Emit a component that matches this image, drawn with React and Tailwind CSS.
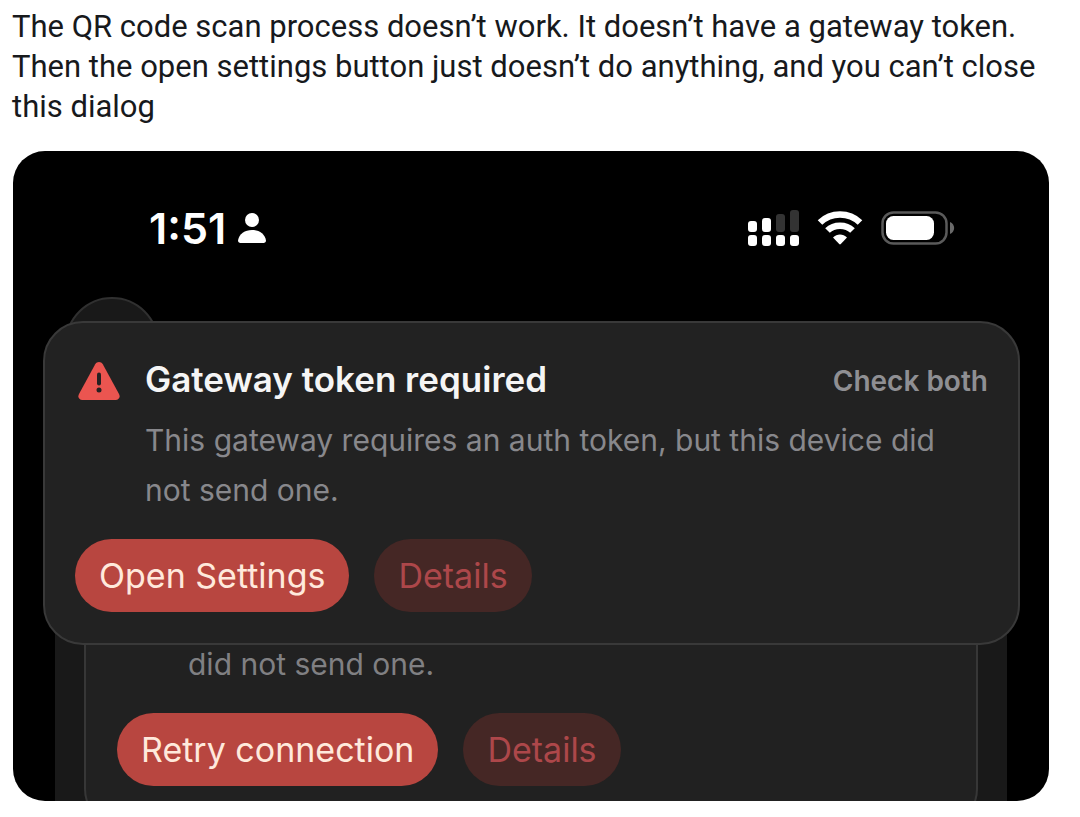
const textFont = "font-['Inter','Liberation_Sans',sans-serif]";

function PersonIcon() {
  return (
    <svg className="h-[30px] w-[28px]" viewBox="0 0 28 30" fill="white" aria-hidden="true">
      <circle cx="14" cy="7" r="7" />
      <path d="M2.5 30C1 30 0 29 0 27.5C1 21 7 17 14 17C21 17 27 21 28 27.5C28 29 27 30 25.5 30Z" />
    </svg>
  );
}

function SignalIcon() {
  return (
    <svg className="h-9 w-[52px]" viewBox="0 0 52 36" fill="white" aria-hidden="true">
      <rect x="1" y="11" width="9" height="11" rx="3" />
      <rect x="15" y="8" width="9" height="14" rx="3" />
      <rect x="29" y="4" width="9" height="18" rx="3" fill="#333333" />
      <rect x="43" y="0" width="9" height="22" rx="3" fill="#333333" />
      <rect x="1" y="25" width="9" height="11" rx="3" />
      <rect x="15" y="25" width="9" height="11" rx="3" />
      <rect x="29" y="25" width="9" height="11" rx="3" />
      <rect x="43" y="25" width="9" height="11" rx="3" />
    </svg>
  );
}

function WifiIcon() {
  return (
    <svg className="h-[34px] w-[46px]" viewBox="0 0 46 34" aria-hidden="true">
      <path d="M3 11.5C14 0.8 32 0.8 43 11.5" fill="none" stroke="white" strokeWidth="6.5" />
      <path d="M10.5 19.5C17 13 29 13 35.5 19.5" fill="none" stroke="white" strokeWidth="6.5" />
      <path d="M16 26.5C20 22.4 26 22.4 30 26.5L23.8 33Q23 33.8 22.2 33Z" fill="white" />
    </svg>
  );
}

function BatteryIcon() {
  return (
    <svg className="h-[34px] w-[74px]" viewBox="0 0 74 34" aria-hidden="true">
      <rect x="1.5" y="1.5" width="64" height="31" rx="11" fill="none" stroke="#5a5a5a" strokeWidth="2.5" />
      <rect x="5" y="5" width="48" height="24" rx="7.5" fill="white" />
      <path d="M69 11C74.5 13 74.5 21 69 23Z" fill="#6a6a6a" />
    </svg>
  );
}

function WarningIcon() {
  return (
    <svg className="h-11 w-[42px]" viewBox="0 -4 42 44" aria-hidden="true">
      <path
        d="M17.2 3.2C19 0.2 23 0.2 24.8 3.2L41 33C42.6 36 41 39 37.6 39H4.4C1 39 -0.6 36 1 33Z"
        fill="#eb5550"
      />
      <path d="M21 13.5V22.5" stroke="#242122" strokeWidth="4" strokeLinecap="round" />
      <circle cx="21" cy="29" r="2.5" fill="#242122" />
    </svg>
  );
}

function PillButton({ children, primary }) {
  return (
    <button
      type="button"
      className={`h-[73px] rounded-full px-6 text-[34px] ${
        primary ? "bg-[#b84640] text-[#ffe9dc]" : "bg-[#452725] text-[#ad474a]"
      }`}
    >
      {children}
    </button>
  );
}

function StatusBar() {
  return (
    <header className="flex items-center justify-between pt-[54px] pr-[94px] pl-[136px]">
      <div className="flex items-center gap-3 text-white">
        <time className="text-[43px] leading-[46px] font-semibold">1:51</time>
        <PersonIcon />
      </div>
      <div className="flex items-center gap-[18px]">
        <SignalIcon />
        <WifiIcon />
        <BatteryIcon />
      </div>
    </header>
  );
}

function GatewayDialog() {
  return (
    <section
      role="dialog"
      aria-labelledby="gateway-title"
      className="relative mr-[29px] ml-[30px] mt-[70px] rounded-[40px] border-2 border-[#393939] bg-[#222222] px-[30px] pt-8 pb-[31px]"
    >
      <div className="flex items-center pl-[3px]">
        <WarningIcon />
        <h2 id="gateway-title" className="ml-[25px] text-[35px] leading-[48px] font-semibold text-[#f5f5f5]">
          Gateway token required
        </h2>
        <span className="ml-auto pt-1 text-[28px] leading-[40px] font-semibold text-[#8f8f93]">Check both</span>
      </div>
      <p className="mt-3 ml-[70px] max-w-[820px] text-[30px] leading-[50px] text-[#88888c]">
        This gateway requires an auth token, but this device did not send one.
      </p>
      <div className="mt-6 flex gap-[25px]">
        <PillButton primary>Open Settings</PillButton>
        <PillButton>Details</PillButton>
      </div>
    </section>
  );
}

// sheet that stays visible underneath the dialog
function ConnectionSheet() {
  return (
    <section className="-mt-10 mr-[42px] ml-[42px] flex flex-col bg-[#191919]">
      <div className="mx-[29px] -mb-7 rounded-b-[40px] border-2 border-t-0 border-[#373737] bg-[#212121] px-[31px] pt-[39px] pb-[41px]">
        <p className="ml-[71px] text-[30px] leading-[40px] text-[#808083]">did not send one.</p>
        <div className="mt-[29px] flex gap-[25px]">
          <PillButton primary>Retry connection</PillButton>
          <PillButton>Details</PillButton>
        </div>
      </div>
    </section>
  );
}

function App() {
  return (
    <main className="min-h-screen bg-white pt-[7px] pr-[31px] pb-4 pl-3">
      <p className="text-[31px] leading-[40px] text-[#17191c] font-['Roboto','Liberation_Sans',sans-serif]">
        The QR code scan process doesn’t work. It doesn’t have a gateway token. Then the open settings button just
        doesn’t do anything, and you can’t close this dialog
      </p>
      <div className={`relative mt-6 ml-px flex flex-col overflow-hidden rounded-[32px] bg-black ${textFont}`}>
        <StatusBar />
        <div className="absolute top-[146px] left-[52px] size-[94px] rounded-full border-2 border-[#303030] bg-[#191919]" />
        <GatewayDialog />
        <ConnectionSheet />
      </div>
    </main>
  );
}

export default App;
